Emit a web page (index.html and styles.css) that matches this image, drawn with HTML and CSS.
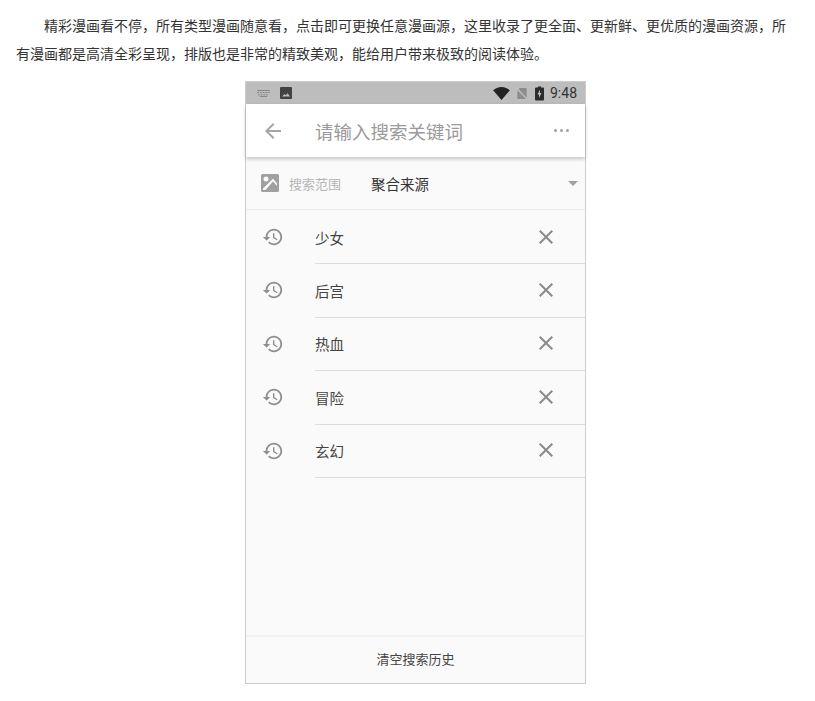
FILE: index.html
```html
<!DOCTYPE html>
<html lang="zh-CN">
<head>
    <meta charset="UTF-8">
    <title>漫画搜索</title>
    <link rel="stylesheet" href="styles.css">
</head>
<body>
    <svg class="defs" width="0" height="0">
        <symbol id="i-history" viewBox="0 0 24 24"><path d="M13 3c-4.97 0-9 4.03-9 9H1l3.89 3.89.07.14L9 12H6c0-3.87 3.13-7 7-7s7 3.13 7 7-3.13 7-7 7c-1.93 0-3.68-.79-4.94-2.06l-1.42 1.42C8.27 19.99 10.51 21 13 21c4.97 0 9-4.03 9-9s-4.03-9-9-9zm-1 5v5l4.28 2.54.72-1.21-3.5-2.08V8H12z"/></symbol>
        <symbol id="i-close" viewBox="0 0 24 24"><path d="M19 6.41L17.59 5 12 10.59 6.41 5 5 6.41 10.59 12 5 17.59 6.41 19 12 13.41 17.59 19 19 17.59 13.41 12z"/></symbol>
    </svg>

    <p class="intro">精彩漫画看不停，所有类型漫画随意看，点击即可更换任意漫画源，这里收录了更全面、更新鲜、更优质的漫画资源，所有漫画都是高清全彩呈现，排版也是非常的精致美观，能给用户带来极致的阅读体验。</p>

    <div class="phone">
        <div class="status-bar">
            <svg class="status-kbd" viewBox="0 0 16 10"><path d="M1 1h14v1H1zM1 3.500h2v1H1zm3 0h2v1H4zm3 0h2v1H7zm3 0h2v1h-2zm3 0h2v1h-2zM2 6h2v1H2zm3 0h2v1H5zm3 0h2v1H8zm3 0h2v1h-2zM4 8h8v1H4z"/></svg>
            <svg class="status-pic" viewBox="0 0 14 14"><path d="M2 1h10a1 1 0 0 1 1 1v10a1 1 0 0 1-1 1H2a1 1 0 0 1-1-1V2a1 1 0 0 1 1-1zm1 9.500h8L8.600 7.200 6.800 9.300 5.500 8z" fill-rule="evenodd"/></svg>
            <span class="status-space"></span>
            <svg class="status-wifi" viewBox="0 0 18 14"><path d="M9 14L0 3.600C2.400 1.400 5.500 0 9 0s6.600 1.400 9 3.600z"/></svg>
            <svg class="status-sim" viewBox="0 0 12 14"><path d="M3.500 1H10a1 1 0 0 1 1 1v9.500L2 2.400zM1 3.500l9.300 9.500H2a1 1 0 0 1-1-1z"/><path d="M0.500 0.500l11 13" stroke="#bdbdbd" stroke-width="1"/></svg>
            <svg class="status-batt" viewBox="0 0 9 14"><path d="M3 0h3v1h2a1 1 0 0 1 1 1v11a1 1 0 0 1-1 1H1a1 1 0 0 1-1-1V2a1 1 0 0 1 1-1h2z"/><path d="M5 3L2.500 8H4v3.500L6.500 6.500H5z" fill="#bdbdbd"/></svg>
            <span class="status-time">9:48</span>
        </div>

        <div class="app-bar">
            <svg class="back-icon" viewBox="0 0 24 24"><path d="M20 11H7.830l5.590-5.590L12 4l-8 8 8 8 1.410-1.410L7.830 13H20v-2z"/></svg>
            <span class="search-hint">请输入搜索关键词</span>
            <span class="more-dots"><i></i><i></i><i></i></span>
        </div>

        <div class="scope-row">
            <svg class="scope-icon" viewBox="0 0 18 18"><path fill-rule="evenodd" d="M1.500 0h15A1.500 1.500 0 0 1 18 1.500v15a1.500 1.500 0 0 1-1.500 1.500h-15A1.500 1.500 0 0 1 0 16.500v-15A1.500 1.500 0 0 1 1.500 0zM5 2.500a2.500 2.500 0 1 0 0 5 2.500 2.500 0 0 0 0-5zM2 14.500v1.500h2.500L12 7.500l4 4.500V9.300L12 4.800z"/></svg>
            <span class="scope-label">搜索范围</span>
            <span class="scope-value">聚合来源</span>
            <span class="scope-caret"></span>
        </div>

        <ul class="history">
            <li class="history-item">
                <svg class="history-icon"><use href="#i-history"/></svg>
                <div class="history-body">
                    <span class="history-text">少女</span>
                    <svg class="close-icon"><use href="#i-close"/></svg>
                </div>
            </li>
            <li class="history-item">
                <svg class="history-icon"><use href="#i-history"/></svg>
                <div class="history-body">
                    <span class="history-text">后宫</span>
                    <svg class="close-icon"><use href="#i-close"/></svg>
                </div>
            </li>
            <li class="history-item">
                <svg class="history-icon"><use href="#i-history"/></svg>
                <div class="history-body">
                    <span class="history-text">热血</span>
                    <svg class="close-icon"><use href="#i-close"/></svg>
                </div>
            </li>
            <li class="history-item">
                <svg class="history-icon"><use href="#i-history"/></svg>
                <div class="history-body">
                    <span class="history-text">冒险</span>
                    <svg class="close-icon"><use href="#i-close"/></svg>
                </div>
            </li>
            <li class="history-item">
                <svg class="history-icon"><use href="#i-history"/></svg>
                <div class="history-body">
                    <span class="history-text">玄幻</span>
                    <svg class="close-icon"><use href="#i-close"/></svg>
                </div>
            </li>
        </ul>

        <div class="clear-btn">清空搜索历史</div>
    </div>
</body>
</html>
```

FILE: styles.css
```css
* {
    box-sizing: border-box;
}
body {
    font-family: "Noto Sans CJK SC", "Liberation Sans", sans-serif;
    background: #fff;
    margin: 0;
    padding: 0 0 0 16px;
    color: #333;
}
.defs {
    position: absolute;
}
.intro {
    margin: 0 0 14px 0;
    padding: 11px 16px 0 0;
    font-size: 14px;
    line-height: 28px;
    text-indent: 2em;
}
.phone {
    width: 341px;
    height: 603px;
    margin: 0 auto;
    border: 1px solid #ccc;
    background: #fafafa;
    display: flex;
    flex-direction: column;
}
.status-bar {
    height: 22px;
    background: #bdbdbd;
    display: flex;
    align-items: center;
    padding: 0 8px 0 10px;
    flex-shrink: 0;
}
.status-kbd {
    width: 15px;
    height: 9px;
    fill: #757575;
    margin-right: 8px;
}
.status-pic {
    width: 14px;
    height: 14px;
    fill: #424242;
}
.status-space {
    flex: 1;
}
.status-wifi {
    width: 17px;
    height: 13px;
    fill: #222;
    margin-right: 6px;
}
.status-sim {
    width: 12px;
    height: 13px;
    fill: #8c8c8c;
    margin-right: 7px;
}
.status-batt {
    width: 9px;
    height: 15px;
    fill: #2b2b2b;
    margin-right: 6px;
}
.status-time {
    font-family: Roboto, "Liberation Sans", sans-serif;
    font-size: 14px;
    color: #333;
}
.app-bar {
    height: 53px;
    background: #fff;
    display: flex;
    align-items: center;
    padding: 0 16px 0 15px;
    box-shadow: 0 2px 4px rgba(0,0,0,0.22);
    position: relative;
    flex-shrink: 0;
}
.back-icon {
    width: 24px;
    height: 24px;
    fill: #a6a6a6;
    margin-right: 30px;
}
.search-hint {
    flex: 1;
    font-size: 18.500px;
    color: #9a9a9a;
}
.more-dots {
    display: flex;
    gap: 3px;
}
.more-dots i {
    width: 3px;
    height: 3px;
    border-radius: 50%;
    background: #a0a0a0;
}
.scope-row {
    height: 53px;
    display: flex;
    align-items: center;
    padding: 0 7px 0 15px;
    border-bottom: 1px solid #ececec;
    flex-shrink: 0;
}
.scope-icon {
    width: 18px;
    height: 18px;
    fill: #a0a0a0;
    margin-right: 10px;
}
.scope-label {
    font-size: 13px;
    color: #b5b5b5;
    width: 82px;
}
.scope-value {
    flex: 1;
    font-size: 14.500px;
    color: #333;
}
.scope-caret {
    width: 0;
    height: 0;
    border-left: 5px solid transparent;
    border-right: 5px solid transparent;
    border-top: 5px solid #a0a0a0;
}
.history {
    list-style: none;
    margin: 0;
    padding: 1px 0 0 0;
    flex: 1;
}
.history-item {
    height: 53.400px;
    display: flex;
    align-items: stretch;
}
.history-icon {
    width: 22px;
    height: 22px;
    fill: #8f8f8f;
    margin: 15px 0 0 16px;
    flex-shrink: 0;
}
.history-body {
    flex: 1;
    margin-left: 31px;
    display: flex;
    align-items: center;
    justify-content: space-between;
    border-bottom: 1px solid #dcdcdc;
    padding-right: 27px;
}
.history-text {
    font-size: 14.500px;
    color: #444;
}
.close-icon {
    width: 24px;
    height: 24px;
    fill: #8a8a8a;
    margin-top: -1px;
}
.clear-btn {
    height: 48px;
    padding-bottom: 4px;
    border-top: 2px solid #f3f3f3;
    display: flex;
    align-items: center;
    justify-content: center;
    font-size: 13px;
    color: #444;
    flex-shrink: 0;
}
```
